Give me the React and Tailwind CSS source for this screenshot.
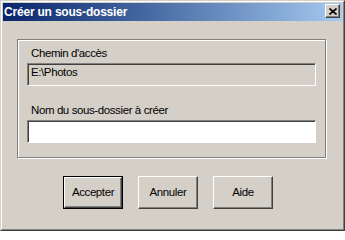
const font = { fontFamily: '"Liberation Sans", Arial, sans-serif' }

function Field({ value, disabled }) {
  return (
    <div
      className={`h-[23px] w-[289px] border border-t-[#808080] border-l-[#808080] border-r-white border-b-white shadow-[inset_1px_1px_0_#404040] pl-[3px] pt-[2px] text-[11.5px] leading-[13px] tracking-[-0.4px] text-black ${
        disabled ? 'bg-[#d4d0c8]' : 'bg-white'
      }`}
    >
      {value}
    </div>
  )
}

function Button({ label, isDefault }) {
  if (isDefault) {
    return (
      <div className="h-[33px] w-[60px] border border-black">
        <div className="flex h-full w-full items-center justify-center border border-t-white border-l-white border-r-[#404040] border-b-[#404040] shadow-[inset_-1px_-1px_0_#808080] text-[11.5px] leading-[13px] tracking-[-0.4px] text-black">
          {label}
        </div>
      </div>
    )
  }
  return (
    <div className="flex h-[33px] w-[60px] items-center justify-center border border-t-white border-l-white border-r-[#404040] border-b-[#404040] shadow-[inset_-1px_-1px_0_#808080] text-[11.5px] leading-[13px] tracking-[-0.4px] text-black">
      {label}
    </div>
  )
}

export default function App() {
  return (
    <div style={font} className="h-[231px] w-[345px] border border-t-[#d4d0c8] border-l-[#d4d0c8] border-r-[#404040] border-b-[#404040] bg-[#d4d0c8]">
      <div className="h-full border border-t-white border-l-white border-r-[#808080] border-b-[#808080] p-[1px]">
        {/* title bar */}
        <div className="flex h-[18px] items-start justify-between bg-gradient-to-r from-[#0a246a] to-[#a6caf0] pl-[1px] pr-[2px]">
          <span className="text-[12px] font-bold leading-[18px] tracking-[-0.2px] text-white">Créer un sous-dossier</span>
          <div className="mt-[1px] flex h-[14px] w-[15px] items-center justify-center border border-t-white border-l-white border-r-[#404040] border-b-[#404040] bg-[#d4d0c8] shadow-[inset_-1px_-1px_0_#808080]">
            <svg width="8" height="7" viewBox="0 0 8 7">
              <path d="M0.5 0.5 L7.5 6.5 M7.5 0.5 L0.5 6.5" stroke="black" strokeWidth="1.6" />
            </svg>
          </div>
        </div>

        {/* group box */}
        <div className="ml-[14px] mt-[18px] w-[309px] border border-[#808080] pb-[14px] pl-[9px] pt-[7px] shadow-[inset_1px_1px_0_#fff,1px_1px_0_#fff]">
          <div className="pl-[4px] text-[11.5px] leading-[13px] tracking-[-0.4px] text-black">Chemin d'accès</div>
          <div className="mt-[3px]">
            <Field value="E:\Photos" disabled />
          </div>
          <div className="mt-[18px] pl-[4px] text-[11.5px] leading-[13px] tracking-[-0.4px] text-black">Nom du sous-dossier à créer</div>
          <div className="mt-[3px]">
            <Field value="" />
          </div>
        </div>

        {/* buttons */}
        <div className="ml-[60px] mt-[18px] flex gap-[15px]">
          <Button label="Accepter" isDefault />
          <Button label="Annuler" />
          <Button label="Aide" />
        </div>
      </div>
    </div>
  )
}
